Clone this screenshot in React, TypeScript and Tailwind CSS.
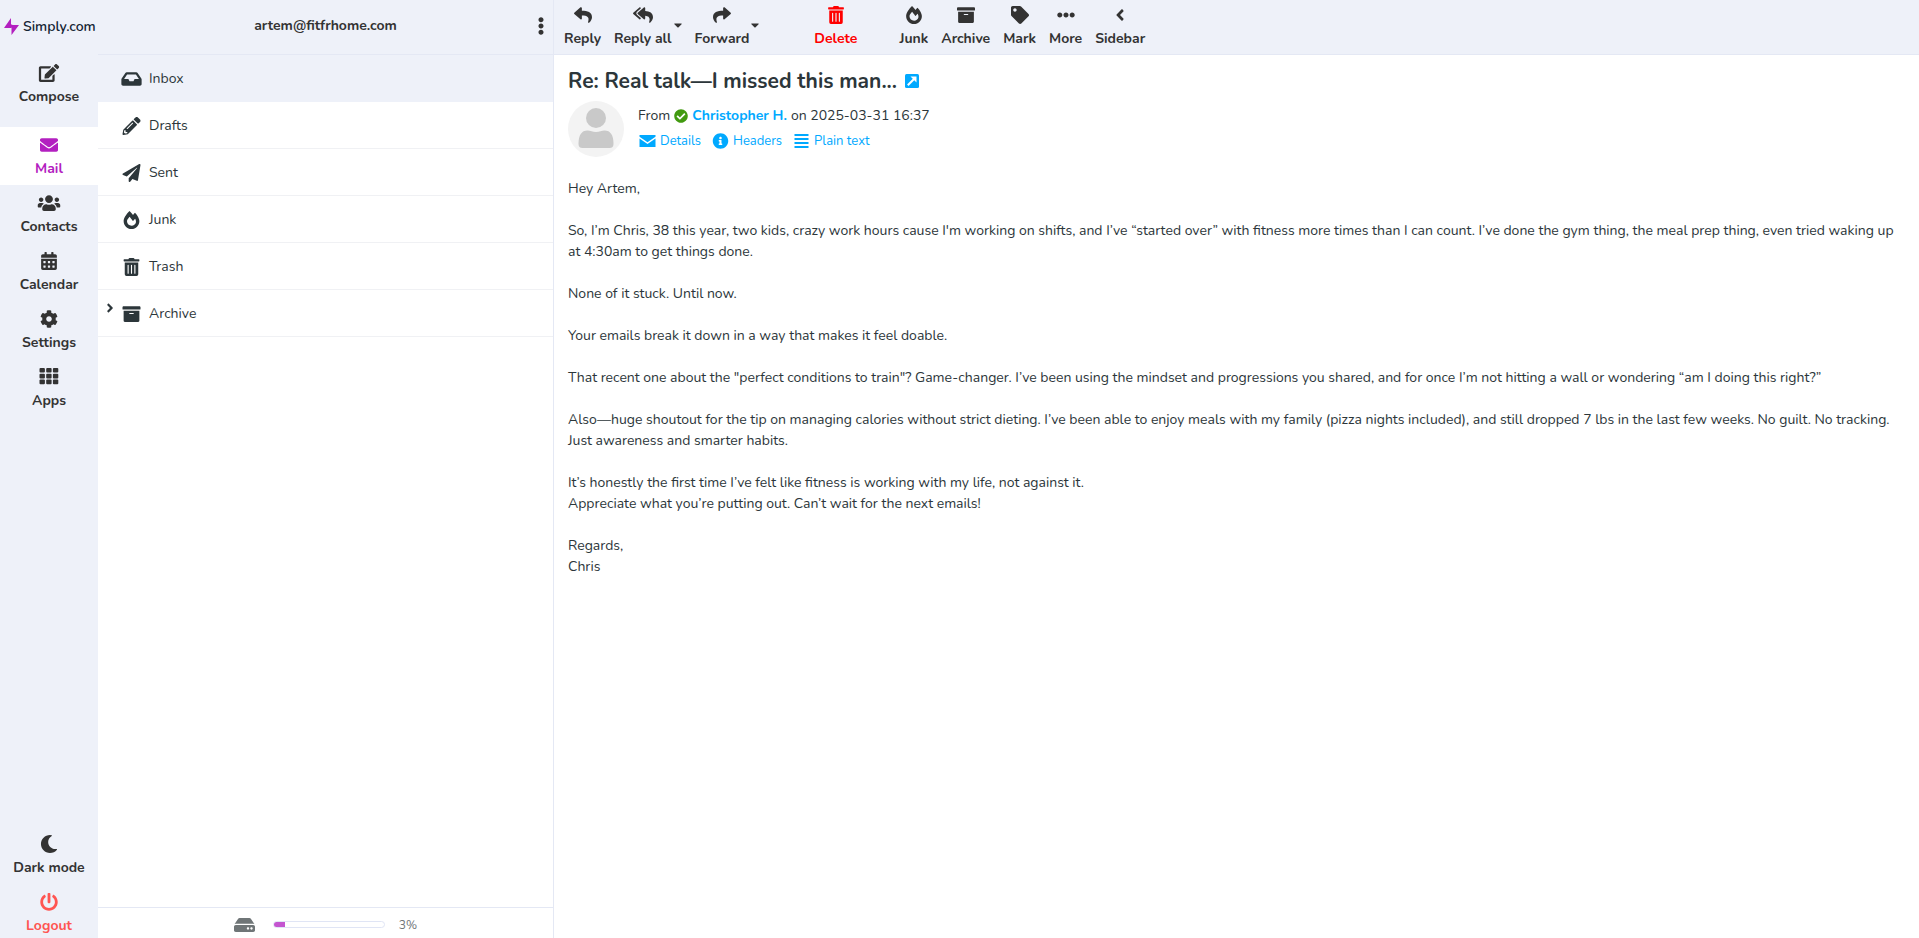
import { useState } from 'react'
import type { IconType } from 'react-icons'
import {
  FaAngleLeft,
  FaAngleRight,
  FaArchive,
  FaCalendarAlt,
  FaCaretDown,
  FaCheckCircle,
  FaCog,
  FaEdit,
  FaEllipsisH,
  FaEllipsisV,
  FaEnvelope,
  FaFireAlt,
  FaHdd,
  FaInbox,
  FaInfoCircle,
  FaMoon,
  FaPaperPlane,
  FaPencilAlt,
  FaPowerOff,
  FaReply,
  FaReplyAll,
  FaShare,
  FaTag,
  FaTrashAlt,
  FaUsers,
} from 'react-icons/fa'

const folders: { name: string; icon: IconType; nested?: boolean }[] = [
  { name: 'Inbox', icon: FaInbox },
  { name: 'Drafts', icon: FaPencilAlt },
  { name: 'Sent', icon: FaPaperPlane },
  { name: 'Junk', icon: FaFireAlt },
  { name: 'Trash', icon: FaTrashAlt },
  { name: 'Archive', icon: FaArchive, nested: true },
]

const paragraphs = [
  ['Hey Artem,'],
  [
    'So, I’m Chris, 38 this year, two kids, crazy work hours cause I\'m working on shifts, and I’ve “started over” with fitness more times than I can count. I’ve done the gym thing, the meal prep thing, even tried waking up at 4:30am to get things done.',
  ],
  ['None of it stuck. Until now.'],
  ['Your emails break it down in a way that makes it feel doable.'],
  [
    'That recent one about the "perfect conditions to train"? Game-changer. I’ve been using the mindset and progressions you shared, and for once I’m not hitting a wall or wondering “am I doing this right?”',
  ],
  [
    'Also—huge shoutout for the tip on managing calories without strict dieting. I’ve been able to enjoy meals with my family (pizza nights included), and still dropped 7 lbs in the last few weeks. No guilt. No tracking. Just awareness and smarter habits.',
  ],
  [
    'It’s honestly the first time I’ve felt like fitness is working with my life, not against it.',
    'Appreciate what you’re putting out. Can’t wait for the next emails!',
  ],
  ['Regards,', 'Chris'],
]

interface IconProps {
  className?: string
}

function AppsIcon({ className }: IconProps) {
  return (
    <svg viewBox="-1 0 21 18" fill="currentColor" className={className}>
      {[0, 5.8, 11.6].map((y) =>
        [0, 6.7, 13.4].map((x) => <rect key={`${x}-${y}`} x={x} y={y} width="5.4" height="4.6" rx="1" />),
      )}
    </svg>
  )
}

function LetterIcon({ className }: IconProps) {
  return (
    <svg viewBox="0 0 17 14" fill="currentColor" className={className}>
      <path d="M.5 1h16v1.800L8.500 8.300.5 2.800Z" />
      <path d="M.5 4.600 8.500 10l8-5.400V13H.5Z" />
    </svg>
  )
}

function LinesIcon({ className }: IconProps) {
  return (
    <svg viewBox="-1 -1 16 16" fill="currentColor" className={className}>
      <path d="M0 0h14v2H0ZM0 4h14v2H0ZM0 8h14v2H0ZM0 12h14v2H0Z" />
    </svg>
  )
}

function OpenIcon({ className }: IconProps) {
  return (
    <svg viewBox="0 0 14 14" className={className}>
      <rect width="14" height="14" rx="1.5" fill="#00a9ff" />
      <path d="M2.800 11.200 9.500 4.500" fill="none" stroke="#fff" strokeWidth="2" />
      <path d="M5.500 2.500h6v6Z" fill="#fff" />
    </svg>
  )
}

function Avatar() {
  return (
    <svg viewBox="0 0 56 56" className="size-14 shrink-0">
      <circle cx="28" cy="28" r="28" fill="#f3f3f3" />
      <circle cx="28" cy="17" r="10" fill="#c9c9c9" />
      <path
        d="M10.500 43c0-9 3-13.500 9-13.500 3 0 5 1.500 8.500 1.500s5.500-1.500 8.500-1.500c6 0 9 4.500 9 13.500q0 4-4 4h-27q-4 0-4-4Z"
        fill="#c9c9c9"
      />
    </svg>
  )
}

interface ActionProps {
  label: string
  icon: IconType | typeof AppsIcon
  tone?: string
}

function NavItem({ label, icon: Icon, tone = 'text-[#333] pb-[6px]' }: ActionProps) {
  return (
    <a href="#" className={`flex flex-col items-center gap-[5px] pt-[9px] ${tone}`}>
      <Icon className="h-[18px] w-6" />
      <span className="text-sm leading-5 font-bold">{label}</span>
    </a>
  )
}

function ToolButton({ label, icon: Icon, tone = 'text-[#333]' }: ActionProps) {
  return (
    <button className={`flex flex-col items-center gap-[5px] ${tone}`}>
      <Icon className="h-[18px] w-5" />
      <span className="text-sm leading-5 font-bold whitespace-nowrap">{label}</span>
    </button>
  )
}

function CaretButton({ label }: { label: string }) {
  return (
    <button aria-label={label} className="flex w-2 items-start pt-3 text-[#333]">
      <FaCaretDown className="h-[14px] w-2" />
    </button>
  )
}

function DetailLink({ label, icon: Icon }: ActionProps) {
  return (
    <a href="#" className="flex items-center gap-1 text-[13px] leading-5 text-[#00a9ff]">
      <Icon className="h-4 w-[17px]" />
      {label}
    </a>
  )
}

export default function App() {
  const [selected, setSelected] = useState('Inbox')

  return (
    <div className="flex min-h-screen bg-white font-['Nunito','Open_Sans',sans-serif] text-sm text-[#2c363a]">
      <nav className="flex w-[98px] shrink-0 flex-col bg-[#eef1f9]">
        <a href="#" className="flex h-[55px] items-center gap-1 pb-[2px] pl-1">
          <svg viewBox="0 0 15 17" className="h-[17px] w-[15px] shrink-0" fill="#b320c0">
            <path d="M7 0v6.500h1.200V9L7 10H0ZM7.500 17V10l.7-3H15Z" />
          </svg>
          <span className="text-sm font-semibold text-[#142433]">Simply.com</span>
        </a>
        <NavItem label="Compose" icon={FaEdit} />
        <div className="mt-[14px]">
          <NavItem label="Mail" icon={FaEnvelope} tone="bg-white text-[#b320c0] pb-[6px]" />
          <NavItem label="Contacts" icon={FaUsers} />
          <NavItem label="Calendar" icon={FaCalendarAlt} />
          <NavItem label="Settings" icon={FaCog} />
          <NavItem label="Apps" icon={AppsIcon} />
        </div>
        <div className="mt-auto">
          <NavItem label="Dark mode" icon={FaMoon} />
          <NavItem label="Logout" icon={FaPowerOff} tone="text-[#ff5552] pb-[2px]" />
        </div>
      </nav>

      <aside className="flex w-[456px] shrink-0 flex-col border-r border-[#e4e8f4]">
        <header className="flex h-[55px] items-center border-b border-[#e4e8f4] bg-[#eef1f9] pb-[3px] text-[#333]">
          <span className="w-6" />
          <h2 className="flex-1 text-center text-sm font-bold">artem@fitfrhome.com</h2>
          <button aria-label="Folder actions" className="flex w-6 justify-center">
            <FaEllipsisV className="size-[18px]" />
          </button>
        </header>
        <ul className="flex-1">
          {folders.map(({ name, icon: Icon, nested }) => (
            <li
              key={name}
              className={`flex h-[47px] items-center border-b pt-[2px] ${selected === name ? 'border-[#eef1f9] bg-[#eef1f9]' : 'border-[#f0f1f4]'}`}
            >
              <span className="flex w-[23px] justify-center pb-3">
                {nested && (
                  <button aria-label="Expand">
                    <FaAngleRight className="size-[14px]" />
                  </button>
                )}
              </span>
              <button onClick={() => setSelected(name)} className="flex flex-1 items-center gap-[7px] text-left">
                <Icon className="h-[18px] w-[21px]" />
                {name}
              </button>
            </li>
          ))}
        </ul>
        <footer className="flex h-[31px] items-center justify-center border-t border-[#e4e8f4] pt-[3px] text-xs text-[#6f7577]">
          <FaHdd className="h-[22px] w-[21px]" />
          <div className="mr-[14px] ml-[18px] h-[7px] w-[112px] overflow-hidden rounded-full border border-[#e0e5f5]">
            <div className="h-full w-[11px] bg-[#c455d0]" />
          </div>
          3%
        </footer>
      </aside>

      <main className="min-w-0 flex-1">
        <header className="flex h-[55px] items-start gap-[13px] border-b border-[#e4e8f4] bg-[#eef1f9] pt-[6px] pl-[10px]">
          <ToolButton label="Reply" icon={FaReply} />
          <div className="flex gap-[2px]">
            <ToolButton label="Reply all" icon={FaReplyAll} />
            <CaretButton label="Reply all options" />
          </div>
          <div className="mr-[42px] flex gap-[2px]">
            <ToolButton label="Forward" icon={FaShare} />
            <CaretButton label="Forward options" />
          </div>
          <ToolButton label="Delete" icon={FaTrashAlt} tone="mr-[29px] text-[#f00]" />
          <ToolButton label="Junk" icon={FaFireAlt} />
          <ToolButton label="Archive" icon={FaArchive} />
          <ToolButton label="Mark" icon={FaTag} />
          <ToolButton label="More" icon={FaEllipsisH} />
          <ToolButton label="Sidebar" icon={FaAngleLeft} />
        </header>

        <article className="px-[14px] pt-[10px]">
          <h1 className="flex h-8 items-center gap-2 text-[21px] font-bold">
            Re: Real talk—I missed this man...
            <a href="#" aria-label="Open in new window">
              <OpenIcon className="size-[14px]" />
            </a>
          </h1>
          <div className="mt-1 flex gap-[14px]">
            <Avatar />
            <div className="pt-[5px]">
              <p className="flex items-center gap-1 leading-5">
                From <FaCheckCircle className="size-[14px] text-[#429a10]" />
                <a href="#" className="font-bold text-[#00a9ff]">
                  Christopher H.
                </a>
                on 2025-03-31 16:37
              </p>
              <div className="mt-[5px] flex gap-[11px] pl-px">
                <DetailLink label="Details" icon={LetterIcon} />
                <DetailLink label="Headers" icon={FaInfoCircle} />
                <DetailLink label="Plain text" icon={LinesIcon} />
              </div>
            </div>
          </div>

          <div className="mt-[21px] space-y-[21px] leading-[21px]">
            {paragraphs.map((lines) => (
              <div key={lines[0]}>
                {lines.map((line) => (
                  <p key={line}>{line}</p>
                ))}
              </div>
            ))}
          </div>
        </article>
      </main>
    </div>
  )
}
